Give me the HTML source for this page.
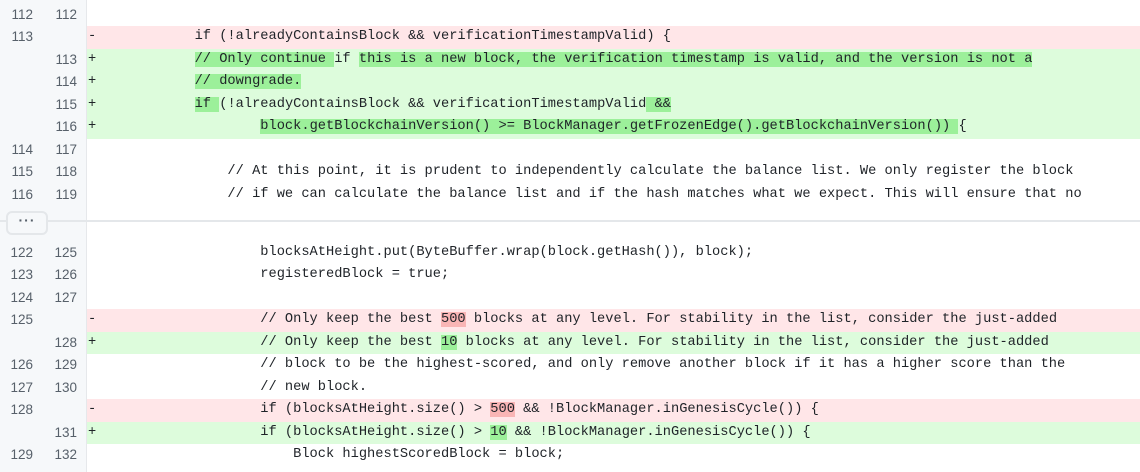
<!DOCTYPE html>
<html><head><meta charset="utf-8"><style>
html,body{margin:0;padding:0;background:#fff;width:1140px;height:472px;overflow:hidden}
body{position:relative;font-family:"Liberation Mono",monospace;font-size:13.7px;color:#1f2328}
.r{position:absolute;left:0;width:1140px;height:22.5px;line-height:22.5px;white-space:pre}
.g{position:absolute;left:0;top:0;width:86px;height:100%;background:#f6f8fa;border-right:1px solid #e6e8eb;font-family:"Liberation Sans",sans-serif;font-size:13.5px;color:#57606a}
.n1,.n2{position:absolute;width:30px;text-align:right}
.n1{left:3px}.n2{left:47px}
.m{position:absolute;left:88px}
.c{position:absolute;left:96px}
.del{background:#ffe6e8}.add{background:#ddfcdc}
.hd{background:#f9b5b5}.ha{background:#9cf09a}
</style></head><body>
<div class="g" style="height:472px;position:absolute;top:0"></div>

<div class="r" style="top:3.5px"><div class="g"><span class="n1">112</span><span class="n2">112</span></div></div>
<div class="r del" style="top:26px"><div class="g"><span class="n1">113</span></div><span class="m">-</span><span class="c">            if (!alreadyContainsBlock &amp;&amp; verificationTimestampValid) {</span></div>
<div class="r add" style="top:48.5px"><div class="g"><span class="n2">113</span></div><span class="m">+</span><span class="c">            <span class="ha">// Only continue </span>if <span class="ha">this is a new block, the verification timestamp is valid, and the version is not a</span></span></div>
<div class="r add" style="top:71px"><div class="g"><span class="n2">114</span></div><span class="m">+</span><span class="c">            <span class="ha">// downgrade.</span></span></div>
<div class="r add" style="top:93.5px"><div class="g"><span class="n2">115</span></div><span class="m">+</span><span class="c">            <span class="ha">if </span>(!alreadyContainsBlock &amp;&amp; verificationTimestampValid<span class="ha"> &amp;&amp;</span></span></div>
<div class="r add" style="top:116px"><div class="g"><span class="n2">116</span></div><span class="m">+</span><span class="c">                    <span class="ha">block.getBlockchainVersion() &gt;= BlockManager.getFrozenEdge().getBlockchainVersion()) </span>{</span></div>
<div class="r" style="top:138.5px"><div class="g"><span class="n1">114</span><span class="n2">117</span></div></div>
<div class="r" style="top:161px"><div class="g"><span class="n1">115</span><span class="n2">118</span></div><span class="c">                // At this point, it is prudent to independently calculate the balance list. We only register the block</span></div>
<div class="r" style="top:183.5px"><div class="g"><span class="n1">116</span><span class="n2">119</span></div><span class="c">                // if we can calculate the balance list and if the hash matches what we expect. This will ensure that no</span></div>

<div style="position:absolute;left:0;top:206px;width:1140px;height:35.5px;background:#fff">
<div style="position:absolute;left:0;top:0;width:86px;height:100%;background:#f6f8fa;border-right:1px solid #e6e8eb"></div>
<div style="position:absolute;left:0;top:13.5px;width:1140px;height:2px;background:#e4e7ea"></div>
<div style="position:absolute;left:6px;top:5px;width:38px;height:20px;border:2px solid #e4e7ea;border-radius:6px;background:#f6f8fa;font-family:'Liberation Sans',sans-serif;font-weight:bold;font-size:14px;line-height:14px;text-align:center;color:#57606a;letter-spacing:1px">···</div>
</div>

<div class="r" style="top:241.5px"><div class="g"><span class="n1">122</span><span class="n2">125</span></div><span class="c">                    blocksAtHeight.put(ByteBuffer.wrap(block.getHash()), block);</span></div>
<div class="r" style="top:264px"><div class="g"><span class="n1">123</span><span class="n2">126</span></div><span class="c">                    registeredBlock = true;</span></div>
<div class="r" style="top:286.5px"><div class="g"><span class="n1">124</span><span class="n2">127</span></div></div>
<div class="r del" style="top:309px"><div class="g"><span class="n1">125</span></div><span class="m">-</span><span class="c">                    // Only keep the best <span class="hd">500</span> blocks at any level. For stability in the list, consider the just-added</span></div>
<div class="r add" style="top:331.5px"><div class="g"><span class="n2">128</span></div><span class="m">+</span><span class="c">                    // Only keep the best <span class="ha">10</span> blocks at any level. For stability in the list, consider the just-added</span></div>
<div class="r" style="top:354px"><div class="g"><span class="n1">126</span><span class="n2">129</span></div><span class="c">                    // block to be the highest-scored, and only remove another block if it has a higher score than the</span></div>
<div class="r" style="top:376.5px"><div class="g"><span class="n1">127</span><span class="n2">130</span></div><span class="c">                    // new block.</span></div>
<div class="r del" style="top:399px"><div class="g"><span class="n1">128</span></div><span class="m">-</span><span class="c">                    if (blocksAtHeight.size() &gt; <span class="hd">500</span> &amp;&amp; !BlockManager.inGenesisCycle()) {</span></div>
<div class="r add" style="top:421.5px"><div class="g"><span class="n2">131</span></div><span class="m">+</span><span class="c">                    if (blocksAtHeight.size() &gt; <span class="ha">10</span> &amp;&amp; !BlockManager.inGenesisCycle()) {</span></div>
<div class="r" style="top:444px"><div class="g"><span class="n1">129</span><span class="n2">132</span></div><span class="c">                        Block highestScoredBlock = block;</span></div>
<div class="r" style="top:466.5px"><div class="g"></div></div>
</body></html>
